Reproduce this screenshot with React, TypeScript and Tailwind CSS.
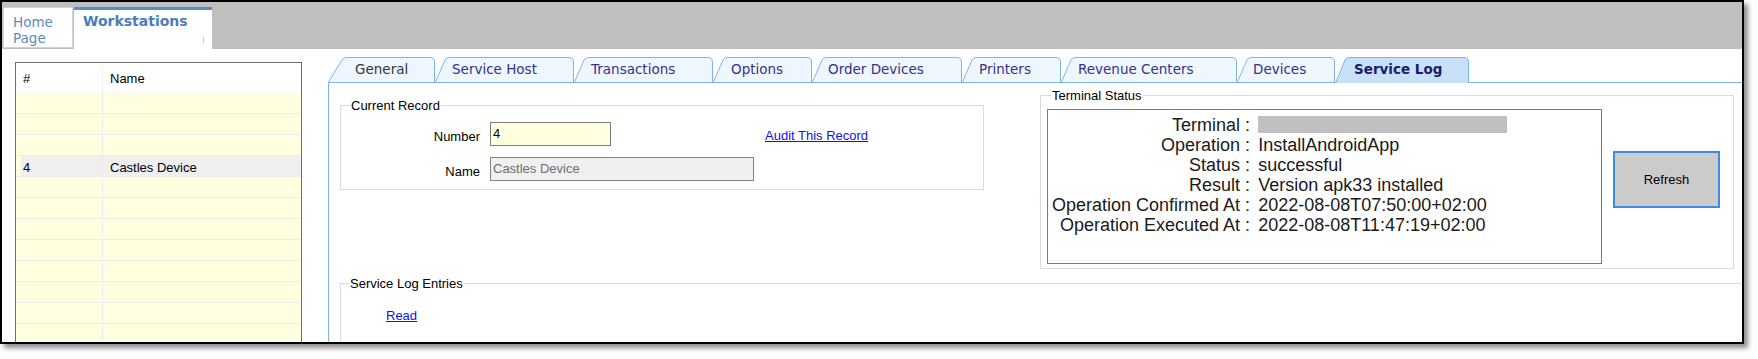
// Workstations > Service Log screen
// Static mock — layout follows the legacy WinForms window

const TABS = [
  { label: 'General', w: 107, wc: 'w-[107px]', pl: 'pl-[27px]', slant: 14, color: 'text-[#38343f]' },
  { label: 'Service Host', w: 139, wc: 'w-[139px]', pl: 'pl-[17px]', slant: 10, color: 'text-[#37318a]' },
  { label: 'Transactions', w: 139, wc: 'w-[139px]', pl: 'pl-[17px]', slant: 10, color: 'text-[#37318a]' },
  { label: 'Options', w: 99, wc: 'w-[99px]', pl: 'pl-[18px]', slant: 10, color: 'text-[#37318a]' },
  { label: 'Order Devices', w: 150, wc: 'w-[150px]', pl: 'pl-[16px]', slant: 10, color: 'text-[#37318a]' },
  { label: 'Printers', w: 99, wc: 'w-[99px]', pl: 'pl-[17px]', slant: 10, color: 'text-[#37318a]' },
  { label: 'Revenue Centers', w: 176, wc: 'w-[176px]', pl: 'pl-[17px]', slant: 10, color: 'text-[#37318a]' },
  { label: 'Devices', w: 98, wc: 'w-[98px]', pl: 'pl-[16px]', slant: 10, color: 'text-[#37318a]' },
  { label: 'Service Log', w: 134, wc: 'w-[134px]', pl: 'pl-[19px]', slant: 10, color: 'text-[#1c1a6b]', active: true },
]

const STATUS = [
  { label: 'Terminal', value: null },
  { label: 'Operation', value: 'InstallAndroidApp' },
  { label: 'Status', value: 'successful' },
  { label: 'Result', value: 'Version apk33 installed' },
  { label: 'Operation Confirmed At', value: '2022-08-08T07:50:00+02:00' },
  { label: 'Operation Executed At', value: '2022-08-08T11:47:19+02:00' },
]

const ROWS = Array.from({ length: 13 }, (_, i) => (i === 3 ? { num: '4', name: 'Castles Device' } : null))

type TabProps = {
  label: string
  w: number
  wc: string
  pl: string
  slant: number
  color: string
  active?: boolean
}

function Tab({ label, w, wc, pl, slant, color, active }: TabProps) {
  const h = active ? 26 : 25
  const d = `M0.5 ${h} L${slant} 3 Q${slant + 1.5} 0.5 ${slant + 4.5} 0.5 L${w - 5} 0.5 Q${w - 0.5} 0.5 ${w - 0.5} 5 L${w - 0.5} ${h}`
  return (
    <div className={`relative shrink-0 ${wc} ${active ? 'h-[26px] -mb-px' : 'h-[25px]'}`}>
      <svg className="absolute left-0 top-0" width={w} height={h}>
        <path d={d} fill={active ? '#c8e1f8' : '#eef6fe'} stroke="#7fb5ea" strokeWidth={1} />
      </svg>
      <span
        className={`relative flex h-[25px] items-center ${pl} ${color} font-['DejaVu_Sans',Verdana,sans-serif] text-[13.5px] whitespace-nowrap ${active ? 'font-bold' : ''}`}
      >
        {label}
      </span>
    </div>
  )
}

function Grid() {
  return (
    <div className="mt-[13px] ml-[13px] h-[300px] w-[287px] shrink-0 border border-[#6e6e6e] bg-[#ffffe0]">
      <div className="flex h-[30px] items-center bg-white pt-[2px]">
        <div className="flex h-full w-[87px] items-center border-r border-[#f0f0f0] pl-[7px]">#</div>
        <div className="pl-[7px]">Name</div>
      </div>
      {ROWS.map((row, i) => (
        <div key={i} className="flex h-[21px] border-b border-[#ececec]">
          <div className="w-[5px] bg-[#ffffe0]" />
          <div
            className={`flex w-[82px] items-center border-r border-[#ececec] pt-[3px] pl-[2px] ${row ? 'bg-[#efefef]' : ''}`}
          >
            {row?.num}
          </div>
          <div className={`flex flex-1 items-center pt-[3px] pl-[7px] ${row ? 'bg-[#efefef]' : ''}`}>{row?.name}</div>
        </div>
      ))}
    </div>
  )
}

export default function App() {
  return (
    <div className="h-[359px] w-[1758px] bg-white font-['Liberation_Sans',Arial,sans-serif] text-[13px] text-black">
      <div className="flex h-[344px] w-[1744px] flex-col overflow-hidden border-2 border-black bg-white shadow-[4px_4px_5px_rgba(0,0,0,0.45)]">
        {/* window tabs */}
        <div className="flex h-[47px] shrink-0 items-end gap-[1px] bg-[#bfbfbf] pl-[1px]">
          <div className="mb-[1px] h-[41px] w-[70px] border border-[#d2d2d2] bg-white pl-[9px] pt-[6px] font-['DejaVu_Sans',Verdana,sans-serif] text-[13.5px] leading-[16px] text-[#5b8ac2]">
            Home
            <br />
            Page
          </div>
          <div className="flex h-[42px] w-[138px] flex-col border-t-[3px] border-[#5b8ec8] bg-white pl-[9px] pt-[3px]">
            <span className="font-['DejaVu_Sans',Verdana,sans-serif] text-[14px] font-bold leading-[16px] text-[#4a7ebb]">
              Workstations
            </span>
            <span className="mt-[8px] mr-[8px] ml-auto h-[6px] w-px bg-[#b9cde3]" />
          </div>
        </div>

        <div className="flex flex-1 items-start">
          <Grid />

          {/* tab control */}
          <div className="mt-[8px] ml-[26px] flex h-[300px] flex-1 flex-col">
            <div className="flex h-[26px] shrink-0 items-end border-b border-[#7fb5ea]">
              {TABS.map(t => (
                <Tab key={t.label} {...t} />
              ))}
            </div>

            <div className="flex-1 border-l border-[#7fb5ea]">
              <div className="flex items-start">
                <fieldset className="mt-[15px] ml-[11px] h-[92px] w-[644px] shrink-0 border border-[#dcdcdc]">
                  <legend className="ml-[9px] px-[1px] leading-[15px]">Current Record</legend>
                  <div className="flex flex-col gap-[11px] pt-[9px]">
                    <div className="flex h-[24px] items-start">
                      <span className="w-[139px] pt-[7px] text-right leading-[15px]">Number</span>
                      <div className="ml-[10px] h-[24px] w-[121px] border border-[#7a7a7a] bg-[#ffffe0] pt-[3px] pl-[2px] leading-[15px]">
                        4
                      </div>
                      <a className="ml-[154px] pt-[6px] leading-[15px] text-[#1010f0] underline">Audit This Record</a>
                    </div>
                    <div className="flex h-[24px] items-start">
                      <span className="w-[139px] pt-[7px] text-right leading-[15px]">Name</span>
                      <div className="ml-[10px] h-[24px] w-[264px] border border-[#828282] bg-[#f0f0f0] pt-[3px] pl-[2px] leading-[15px] text-[#6d6d6d]">
                        Castles Device
                      </div>
                    </div>
                  </div>
                </fieldset>

                <fieldset className="mt-[5px] ml-[56px] h-[181px] w-[694px] shrink-0 border border-[#dcdcdc]">
                  <legend className="ml-[10px] px-[1px] leading-[15px]">Terminal Status</legend>
                  <div className="flex items-start pt-[6px] pl-[6px]">
                    <div className="h-[155px] w-[555px] border border-[#7a7a7a] bg-white">
                      <div className="grid grid-cols-[auto_auto] justify-start gap-x-[8px] pt-[5px] pl-[4px] text-[18px] leading-[20px] text-[#1a1a1a]">
                        {STATUS.map(s => (
                          <div key={s.label} className="contents">
                            <span className="text-right whitespace-nowrap">{s.label} :</span>
                            {s.value ? (
                              <span className="whitespace-nowrap">{s.value}</span>
                            ) : (
                              <span className="mt-[1px] h-[17px] w-[249px] bg-[#c0c0c0]" />
                            )}
                          </div>
                        ))}
                      </div>
                    </div>
                    <button className="mt-[42px] ml-[11px] h-[57px] w-[107px] border-2 border-[#3b8de0] bg-[#cbcbcb] text-[13px] text-black">
                      Refresh
                    </button>
                  </div>
                </fieldset>
              </div>

              <fieldset className="mt-[7px] ml-[11px] h-[100px] w-[1420px] border border-[#dcdcdc]">
                <legend className="ml-[8px] px-[1px] leading-[15px]">Service Log Entries</legend>
                <div className="pt-[15px] pl-[45px]">
                  <a className="leading-[15px] text-[#1010f0] underline">Read</a>
                </div>
              </fieldset>
            </div>
          </div>
        </div>
      </div>
    </div>
  )
}
